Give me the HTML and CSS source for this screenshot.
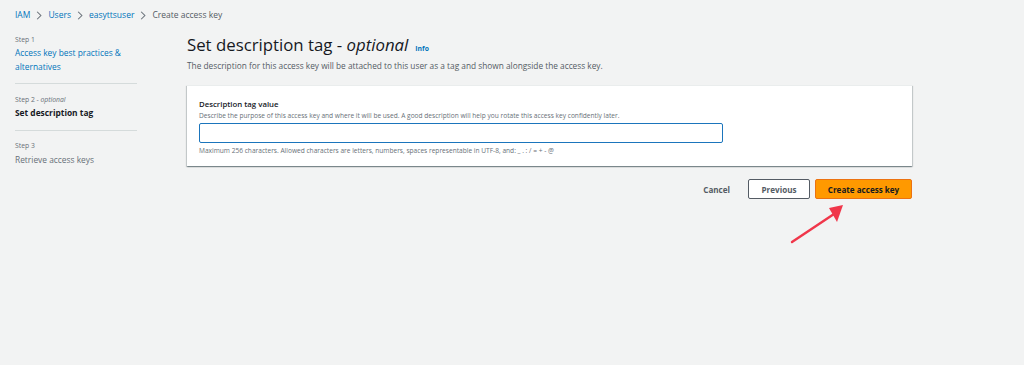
FILE: index.html
```html
<!DOCTYPE html>
<html lang="en">
<head>
<meta charset="utf-8">
<title>Create access key</title>
<link rel="stylesheet" href="styles.css">
</head>
<body>
<nav class="breadcrumb">
  <a class="crumb-link" href="#">IAM</a>
  <svg class="chev" viewBox="0 0 8 12" width="6" height="9"><path d="M1.5 1 L6.5 6 L1.5 11" fill="none" stroke="#687078" stroke-width="1.4"/></svg>
  <a class="crumb-link" href="#">Users</a>
  <svg class="chev" viewBox="0 0 8 12" width="6" height="9"><path d="M1.5 1 L6.5 6 L1.5 11" fill="none" stroke="#687078" stroke-width="1.4"/></svg>
  <a class="crumb-link" href="#">easyttsuser</a>
  <svg class="chev" viewBox="0 0 8 12" width="6" height="9"><path d="M1.5 1 L6.5 6 L1.5 11" fill="none" stroke="#687078" stroke-width="1.4"/></svg>
  <span class="crumb-current">Create access key</span>
</nav>
<div class="layout">
  <aside class="steps">
    <div class="step step-first">
      <div class="step-label">Step 1</div>
      <a class="step-title step-link" href="#">Access key best practices &amp; alternatives</a>
    </div>
    <div class="step">
      <div class="step-label">Step 2 - <i>optional</i></div>
      <div class="step-title step-active">Set description tag</div>
    </div>
    <div class="step step-last">
      <div class="step-label">Step 3</div>
      <div class="step-title step-muted">Retrieve access keys</div>
    </div>
  </aside>
  <main class="main">
    <h1 class="title">Set description tag - <i>optional</i><a class="info" href="#">Info</a></h1>
    <p class="lead">The description for this access key will be attached to this user as a tag and shown alongside the access key.</p>
    <section class="card">
      <div class="field-label">Description tag value</div>
      <div class="field-hint">Describe the purpose of this access key and where it will be used. A good description will help you rotate this access key confidently later.</div>
      <input class="field-input" type="text">
      <div class="field-constraint">Maximum 256 characters. Allowed characters are letters, numbers, spaces representable in UTF-8, and: _ . : / = + - @</div>
    </section>
    <div class="actions">
      <button class="btn btn-link">Cancel</button>
      <button class="btn btn-normal">Previous</button>
      <button class="btn btn-primary">Create access key</button>
    </div>
  </main>
</div>
<svg class="arrow" viewBox="0 0 80 60" width="80" height="60">
  <line x1="12" y1="47" x2="54" y2="19" stroke="#f0364a" stroke-width="2.4" stroke-linecap="round"/>
  <polygon points="63,10 49,13 57,27" fill="#f0364a"/>
</svg>
</body>
</html>
```
FILE: styles.css
```css
html, body {
  margin: 0;
  padding: 0;
}
body {
  background: #f2f3f3;
  font-family: "Open Sans", "Noto Sans", sans-serif;
  color: #16191f;
  height: 365px;
  position: relative;
  overflow: hidden;
}
a { text-decoration: none; }

.breadcrumb {
  display: flex;
  align-items: center;
  height: 22px;
  padding: 8px 0 0 15px;
  box-sizing: border-box;
  font-size: 8.5px;
  line-height: 14px;
}
.crumb-link { color: #0073bb; }
.crumb-current { color: #545b64; }
.chev { margin: 0 6px; }

.layout {
  display: flex;
  gap: 50px;
  padding-left: 15px;
}

.steps {
  width: 122px;
  flex: none;
}
.step {
  padding: 10px 0;
  border-bottom: 1px solid #d5dbdb;
}
.step-first { padding-top: 11.5px; padding-bottom: 9.5px; }
.step-last { border-bottom: none; padding-top: 9.5px; }
.step-label {
  font-size: 6.8px;
  line-height: 11px;
  color: #687078;
}
.step-title {
  display: block;
  margin-top: 1.5px;
  font-size: 8.4px;
  line-height: 13.5px;
}
.step-link { color: #0073bb; }
.step-active { font-weight: 700; color: #16191f; }
.step-muted { color: #687078; }

.main {
  width: 725px;
  flex: none;
}
.title {
  margin: 11px 0 0;
  font-size: 16.8px;
  line-height: 24px;
  height: 24px;
  font-weight: 400;
  color: #16191f;
}
.info {
  font-size: 6.8px;
  line-height: 0;
  font-weight: 700;
  color: #0073bb;
  margin-left: 7px;
}
.lead {
  margin: 3px 0 0;
  font-size: 8.3px;
  line-height: 12px;
  color: #545b64;
}
.card {
  margin-top: 13px;
  background: #fff;
  padding: 12px 12px 11px 12px;
  box-shadow: 0 1px 1px 0 rgba(0, 28, 36, 0.3), 1px 1px 1px 0 rgba(0, 28, 36, 0.15), -1px 1px 1px 0 rgba(0, 28, 36, 0.15);
  border-top: 1px solid #eaeded;
  height: 81px;
  box-sizing: border-box;
}
.field-label {
  font-size: 7.8px;
  line-height: 13px;
  font-weight: 600;
  color: #16191f;
}
.field-hint {
  font-size: 6.6px;
  line-height: 9px;
  color: #687078;
}
.field-input {
  display: block;
  margin-top: 2.5px;
  width: 524px;
  height: 20px;
  box-sizing: border-box;
  border: 1.5px solid #1b75bc;
  border-radius: 2px;
  background: #fff;
  padding: 0 6px;
  font: inherit;
}
.field-constraint {
  margin-top: 3px;
  font-size: 6.6px;
  line-height: 10px;
  color: #687078;
}

.actions {
  display: flex;
  justify-content: flex-end;
  align-items: center;
  margin-top: 13px;
  gap: 5px;
}
.btn {
  font-family: inherit;
  font-weight: 700;
  font-size: 8.1px;
  height: 20px;
  border-radius: 2px;
  padding: 0;
  cursor: pointer;
  box-sizing: border-box;
}
.btn-link {
  background: none;
  border: none;
  color: #545b64;
  margin-right: 13px;
}
.btn-normal {
  width: 62px;
  background: #fff;
  border: 1px solid #545b64;
  color: #545b64;
}
.btn-primary {
  width: 97px;
  background: #ff9900;
  border: 1px solid #ec7211;
  color: #16191f;
}

.arrow {
  position: absolute;
  left: 780px;
  top: 195px;
}
```
